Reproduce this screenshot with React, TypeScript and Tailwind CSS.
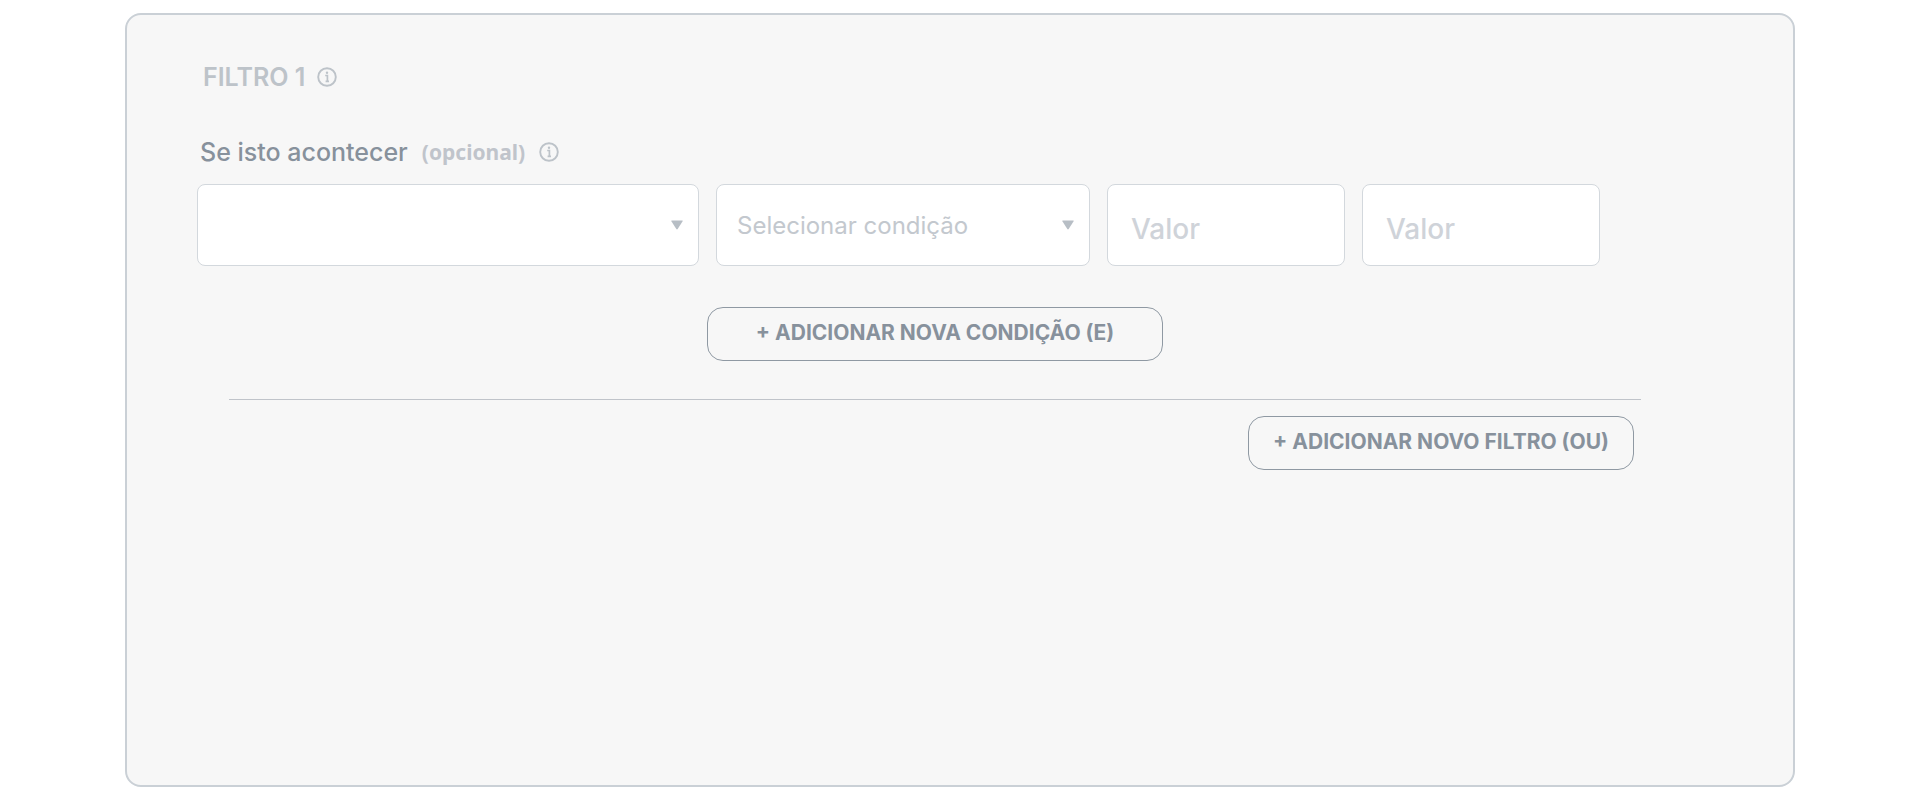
import type { ReactNode } from 'react'

const fieldBox = 'h-[82px] w-full rounded-lg border border-[#d3d8dd] bg-white outline-none'

function InfoIcon() {
  return (
    <svg className="size-5 shrink-0" viewBox="0 0 20 20" fill="none" stroke="#bdc3c9" aria-hidden="true">
      <circle cx="10" cy="10" r="8.8" strokeWidth="1.9" />
      <path d="M8.2 8.500h2.200v6M8.600 14.300h3.400" strokeWidth="1.700" />
      <circle cx="10" cy="5.700" r="1.200" fill="#bdc3c9" stroke="none" />
    </svg>
  )
}

function SelectField({ label, placeholder }: { label: string; placeholder: string }) {
  return (
    <div className="relative">
      <select
        aria-label={label}
        defaultValue=""
        className={`${fieldBox} appearance-none pt-0.5 pl-5 pr-12 font-['Inter',sans-serif] text-2xl text-[#c3c8ce]`}
      >
        <option value="">{placeholder}</option>
      </select>
      <svg
        className="pointer-events-none absolute right-4 top-9 h-[10px] w-3"
        viewBox="0 0 12 10"
        fill="#b7bec5"
        aria-hidden="true"
      >
        <path d="M.8.5h10.4q.9 0 .4.8L6.7 9q-.7.9-1.4 0L.4 1.300Q0 .5.8.5z" />
      </svg>
    </div>
  )
}

function ValueField({ label }: { label: string }) {
  return (
    <input
      type="text"
      aria-label={label}
      placeholder="Valor"
      className={`${fieldBox} px-[23px] pt-2 font-['Inter',sans-serif] text-[28px] font-medium placeholder:text-[#cfd3d9]`}
    />
  )
}

function OutlineButton({ className, children }: { className: string; children: ReactNode }) {
  return (
    <button
      type="button"
      className={`h-[54px] rounded-2xl border border-[#8f99a3] pb-0.5 font-['Inter',sans-serif] text-[21px] font-bold text-[#87919c] ${className}`}
    >
      {children}
    </button>
  )
}

export default function App() {
  return (
    <main className="bg-white px-[125px] py-[13px]">
      <section className="rounded-2xl border-2 border-[#cad0d6] bg-[#f7f7f7] pt-[46px] pr-[152px] pb-[315px] pl-[70px]">
        <div className="flex items-center gap-3 pl-1.5">
          <h2 className="font-['Inter',sans-serif] text-[25px] leading-8 font-semibold text-[#bdc3c9]">FILTRO 1</h2>
          <InfoIcon />
        </div>

        <div className="mt-[43px] flex items-center gap-3.5 pl-[3px]">
          <h3 className="font-['Inter',sans-serif] text-[25px] leading-8 font-medium text-[#87919c]">Se isto acontecer</h3>
          <span className="font-['Noto_Sans',sans-serif] text-[21px] leading-8 font-bold text-[#c0c4cb]">(opcional)</span>
          <InfoIcon />
        </div>

        <div className="mt-4 mr-[41px] grid grid-cols-[502fr_374fr_238fr_238fr] gap-[17px]">
          <SelectField label="Campo" placeholder="" />
          <SelectField label="Condição" placeholder="Selecionar condição" />
          <ValueField label="Primeiro valor" />
          <ValueField label="Segundo valor" />
        </div>

        <div className="mt-[41px] ml-8 flex flex-col items-center">
          <OutlineButton className="px-12">+ ADICIONAR NOVA CONDIÇÃO (E)</OutlineButton>
          <hr className="mt-[38px] w-full border-[#c0c4ca]" />
          <OutlineButton className="mt-4 mr-[7px] self-end px-6">+ ADICIONAR NOVO FILTRO (OU)</OutlineButton>
        </div>
      </section>
    </main>
  )
}
